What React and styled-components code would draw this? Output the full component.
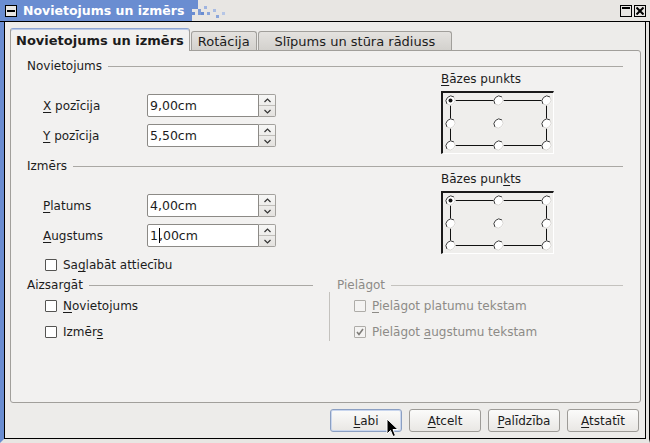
import styled, { createGlobalStyle } from "styled-components";

const GlobalStyle = createGlobalStyle`
  html, body {
    margin: 0;
    padding: 0;
    background: #ffffff;
  }
  body {
    font-family: "DejaVu Sans", "Liberation Sans", sans-serif;
    font-size: 12px;
    color: #1c1c1c;
  }
`;

const Window = styled.div`
  position: relative;
  width: 650px;
  height: 443px;
  box-sizing: border-box;
  display: flex;
  flex-direction: column;
  background: #e6e4e1;
  overflow: hidden;
`;

const TitleBar = styled.div`
  height: 21px;
  flex: none;
  display: flex;
  align-items: center;
  border-bottom: 1px solid #000;
  background: #e8e6e3;
`;

const TitleFill = styled.div`
  height: 100%;
  display: flex;
  align-items: center;
  gap: 6px;
  padding-left: 5px;
  padding-right: 2px;
  background: #6a8dd1;
`;

const TitleText = styled.span`
  color: #ffffff;
  font-weight: bold;
  font-size: 12.5px;
  white-space: nowrap;
`;

const Fade = styled.svg`
  display: block;
  flex: none;
`;

const Spacer = styled.div`
  flex: 1;
`;

const FrameButton = styled.div`
  width: 12px;
  height: 12px;
  box-sizing: border-box;
  border: 1px solid #000;
  background: #e8e6e3;
  display: flex;
  align-items: center;
  justify-content: center;
  margin-right: ${(p) => p.$gap || 0}px;
`;

const Frame = styled.div`
  flex: 1;
  display: flex;
  min-height: 0;
  border-left: 4px solid #6a8dd1;
  border-right: 1px solid #000;
  border-bottom: 4px solid #e8e6e3;
`;

const Body = styled.div`
  flex: 1;
  display: flex;
  flex-direction: column;
  padding: 6px 4px 6px 5px;
  background: #edecea;
  border-left: 1px solid #000;
  border-right: 1px solid #000;
  border-bottom: 1px solid #000;
  margin-right: 3px;
`;

const TabRow = styled.div`
  height: 22px;
  display: flex;
  align-items: flex-end;
  gap: 1px;
`;

const Tab = styled.div`
  position: relative;
  box-sizing: border-box;
  padding: 0 ${(p) => p.$pad}px;
  height: ${(p) => (p.$active ? 23 : 19)}px;
  margin-bottom: ${(p) => (p.$active ? -1 : 0)}px;
  z-index: ${(p) => (p.$active ? 1 : 0)};
  display: flex;
  align-items: center;
  border: 1px solid #a19f9b;
  border-bottom: none;
  border-top-color: ${(p) => (p.$active ? "#8ba4d4" : "#a19f9b")};
  border-radius: 3px 3px 0 0;
  font-weight: ${(p) => (p.$active ? "bold" : "normal")};
  font-size: 13px;
  white-space: nowrap;
  background: ${(p) =>
    p.$active ? "#f2f1f0" : "linear-gradient(#e4e2df, #d3d1cd)"};
  box-shadow: ${(p) => (p.$active ? "inset 0 1px 0 #b9c9e8" : "none")};
`;

const Panel = styled.div`
  flex: 1;
  box-sizing: border-box;
  display: flex;
  flex-direction: column;
  padding: 9px 17px 0 16px;
  background: #f2f1f0;
  border: 1px solid #a19f9b;
  border-radius: 0 3px 3px 3px;
`;

const SectionHeader = styled.div`
  display: flex;
  align-items: center;
  gap: 6px;
  line-height: 13px;
  margin-top: ${(p) => p.$top || 0}px;
  color: ${(p) => (p.$disabled ? "#8d8b87" : "inherit")};
  padding-left: ${(p) => p.$indent || 0}px;

  &::after {
    content: "";
    flex: 1;
    height: 1px;
    background: ${(p) => (p.$disabled ? "#c4c2be" : "#aaa8a4")};
  }
`;

const SectionRow = styled.div`
  display: grid;
  grid-template-columns: 1fr 182px;
`;

const Fields = styled.div`
  display: flex;
  flex-direction: column;
  gap: 7px;
  padding: 21px 0 0 16px;
`;

const FieldRow = styled.div`
  display: flex;
  align-items: center;
  height: 23px;
`;

const FieldLabel = styled.label`
  width: 104px;
`;

const Mn = styled.span`
  text-decoration: underline;
  text-underline-offset: 2px;
`;

const InputBox = styled.div`
  width: 112px;
  height: 23px;
  box-sizing: border-box;
  display: flex;
  align-items: center;
  padding-left: 2px;
  background: #ffffff;
  border: 1px solid #8c8a86;
  border-radius: 2px 0 0 2px;
  font-size: 12.5px;
`;

const Caret = styled.span`
  display: inline-block;
  width: 1px;
  height: 15px;
  margin: 0 -1px 0 1px;
  background: #000;
  vertical-align: middle;
`;

const Spin = styled.div`
  width: 17px;
  height: 23px;
  box-sizing: border-box;
  display: flex;
  flex-direction: column;
  border: 1px solid #a3a19d;
  border-left: none;
  border-radius: 0 2px 2px 0;
  background: linear-gradient(#f7f7f6, #e4e2df);
`;

const SpinHalf = styled.div`
  flex: 1;
  display: flex;
  align-items: center;
  justify-content: center;
  border-top: ${(p) => (p.$lower ? "1px solid #c0beba" : "none")};
`;

const BaseCol = styled.div`
  display: flex;
  flex-direction: column;
`;

const BaseLabel = styled.div`
  line-height: 13px;
`;

const BaseBox = styled.div`
  margin-top: 5px;
  width: 113px;
  height: 63px;
  box-sizing: border-box;
  border-top: 2px solid #1a1a1a;
  border-left: 2px solid #1a1a1a;
  border-right: 1px solid #ffffff;
  border-bottom: 1px solid #ffffff;
  background: #efeeec;
`;

const CheckRow = styled.label`
  display: flex;
  align-items: center;
  gap: 6px;
  height: 14px;
  padding-left: ${(p) => p.$indent || 0}px;
  margin-top: ${(p) => p.$top || 0}px;
  color: ${(p) => (p.$disabled ? "#8d8b87" : "inherit")};
`;

const Box = styled.span`
  width: 12px;
  height: 12px;
  box-sizing: border-box;
  display: flex;
  align-items: center;
  justify-content: center;
  border: 1px solid ${(p) => (p.$disabled ? "#aeaca8" : "#555452")};
  border-radius: 1px;
  background: ${(p) => (p.$disabled ? "#f4f3f2" : "#ffffff")};
`;

const LowerGrid = styled.div`
  display: grid;
  grid-template-columns: 286px 1fr;
  column-gap: 16px;
  margin-top: 7px;
`;

const Column = styled.div`
  display: flex;
  flex-direction: column;
`;

const CheckList = styled.div`
  display: flex;
  flex-direction: column;
  gap: 12px;
  padding: 7px 0 2px ${(p) => p.$pad || 0}px;
  border-left: ${(p) => (p.$rule ? "1px solid #c4c2be" : "none")};
`;

const ButtonRow = styled.div`
  display: flex;
  justify-content: flex-end;
  gap: 7px;
  margin-top: 6px;
  padding-right: 2px;
`;

const Button = styled.button`
  width: 72px;
  height: 23px;
  padding: 0;
  font-family: inherit;
  font-size: 12px;
  color: #1c1c1c;
  border: 1px solid ${(p) => (p.$focused ? "#8b9fc2" : "#9d9b97")};
  border-radius: 3px;
  background: linear-gradient(#fbfbfa, #e9e7e4);
  box-shadow: ${(p) => (p.$focused ? "inset 0 0 0 1px #c9d6ee" : "none")};
`;

const Pointer = styled.svg`
  position: absolute;
  left: 386px;
  top: 418px;
`;

function Chevron({ up }) {
  return (
    <svg width="7" height="5" viewBox="0 0 7 5">
      <path
        d={up ? "M0.5 4 L3.5 1 L6.5 4" : "M0.5 1 L3.5 4 L6.5 1"}
        fill="none"
        stroke="#333"
        strokeWidth="1.2"
      />
    </svg>
  );
}

function SpinField({ children }) {
  return (
    <>
      <InputBox>{children}</InputBox>
      <Spin>
        <SpinHalf>
          <Chevron up />
        </SpinHalf>
        <SpinHalf $lower>
          <Chevron />
        </SpinHalf>
      </Spin>
    </>
  );
}

function Radio({ x, y, on }) {
  return (
    <g>
      <circle cx={x} cy={y} r="5" fill="#ffffff" />
      <path
        d={`M${x - 3.5} ${y + 3.5} A5 5 0 0 1 ${x + 3.5} ${y - 3.5}`}
        fill="none"
        stroke="#3a3a3a"
        strokeWidth="1"
      />
      <path
        d={`M${x + 3.5} ${y - 3.5} A5 5 0 0 1 ${x - 3.5} ${y + 3.5}`}
        fill="none"
        stroke="#d8d6d3"
        strokeWidth="1"
      />
      {on && <circle cx={x} cy={y} r="2" fill="#111" />}
    </g>
  );
}

// 3x3 reference point picker; the first point is selected
function BasePoint() {
  const xs = [7, 55, 103];
  const ys = [7, 30, 52];
  return (
    <BaseBox>
      <svg width="110" height="60" viewBox="0 0 110 60">
        <rect
          x="7.5"
          y="7.5"
          width="96"
          height="45"
          fill="none"
          stroke="#111"
          strokeWidth="1"
        />
        {ys.map((y) =>
          xs.map((x) => (
            <Radio key={`${x}-${y}`} x={x + 0.5} y={y + 0.5} on={x === 7 && y === 7} />
          ))
        )}
      </svg>
    </BaseBox>
  );
}

function Check({ checked, disabled }) {
  return (
    <Box $disabled={disabled}>
      {checked && (
        <svg width="8" height="8" viewBox="0 0 8 8">
          <path
            d="M1 4 L3 6.5 L7 1"
            fill="none"
            stroke={disabled ? "#7f7d79" : "#222"}
            strokeWidth="1.6"
          />
        </svg>
      )}
    </Box>
  );
}

export default function App() {
  return (
    <>
      <GlobalStyle />
      <Window>
        <TitleBar>
          <TitleFill>
            <FrameButton>
              <svg width="8" height="2">
                <rect width="8" height="2" fill="#000" />
              </svg>
            </FrameButton>
            <TitleText>Novietojums un izmērs</TitleText>
          </TitleFill>
          <Fade width="42" height="21" viewBox="0 0 42 21">
            <rect x="0" y="0" width="6" height="21" fill="#6a8dd1" />
            <rect x="6" y="0" width="6" height="9" fill="#6a8dd1" />
            <rect x="6" y="12" width="3" height="3" fill="#6a8dd1" />
            <rect x="12" y="9" width="3" height="6" fill="#7f9cd6" />
            <rect x="15" y="12" width="3" height="3" fill="#6a8dd1" />
            <rect x="18" y="6" width="3" height="3" fill="#9fb4e0" />
            <rect x="21" y="12" width="3" height="3" fill="#8aa5da" />
            <rect x="27" y="9" width="3" height="3" fill="#a9bce3" />
            <rect x="30" y="15" width="3" height="3" fill="#8aa5da" />
            <rect x="36" y="12" width="3" height="3" fill="#b6c6e6" />
          </Fade>
          <Spacer />
          <FrameButton $gap={2}>
            <svg width="8" height="8">
              <rect x="0" y="0" width="8" height="2" fill="#000" />
            </svg>
          </FrameButton>
          <FrameButton $gap={4}>
            <svg width="8" height="8" viewBox="0 0 8 8">
              <path d="M0.5 0.5 L7.5 7.5 M7.5 0.5 L0.5 7.5" stroke="#000" strokeWidth="2" />
            </svg>
          </FrameButton>
        </TitleBar>

        <Frame>
          <Body>
            <TabRow>
              <Tab $active $pad={5}>
                Novietojums un izmērs
              </Tab>
              <Tab $pad={6}>Rotācija</Tab>
              <Tab $pad={16}>Slīpums un stūra rādiuss</Tab>
            </TabRow>

            <Panel>
              <SectionHeader>Novietojums</SectionHeader>
              <SectionRow>
                <Fields>
                  <FieldRow>
                    <FieldLabel>
                      <Mn>X</Mn> pozīcija
                    </FieldLabel>
                    <SpinField>9,00cm</SpinField>
                  </FieldRow>
                  <FieldRow>
                    <FieldLabel>
                      <Mn>Y</Mn> pozīcija
                    </FieldLabel>
                    <SpinField>5,50cm</SpinField>
                  </FieldRow>
                </Fields>
                <BaseCol>
                  <BaseLabel>
                    <Mn>B</Mn>āzes punkts
                  </BaseLabel>
                  <BasePoint />
                </BaseCol>
              </SectionRow>

              <SectionHeader $top={6}>Izmērs</SectionHeader>
              <SectionRow>
                <Fields>
                  <FieldRow>
                    <FieldLabel>
                      <Mn>P</Mn>latums
                    </FieldLabel>
                    <SpinField>4,00cm</SpinField>
                  </FieldRow>
                  <FieldRow>
                    <FieldLabel>
                      <Mn>A</Mn>ugstums
                    </FieldLabel>
                    <SpinField>
                      1<Caret />,00cm
                    </SpinField>
                  </FieldRow>
                </Fields>
                <BaseCol>
                  <BaseLabel>
                    Bāzes pun<Mn>k</Mn>ts
                  </BaseLabel>
                  <BasePoint />
                </BaseCol>
              </SectionRow>

              <CheckRow $indent={18} $top={4}>
                <Check />
                <span>
                  Sa<Mn>g</Mn>labāt attiecību
                </span>
              </CheckRow>

              <LowerGrid>
                <Column>
                  <SectionHeader>Aizsargāt</SectionHeader>
                  <CheckList $pad={18}>
                    <CheckRow>
                      <Check />
                      <span>
                        <Mn>N</Mn>ovietojums
                      </span>
                    </CheckRow>
                    <CheckRow>
                      <Check />
                      <span>
                        Izmēr<Mn>s</Mn>
                      </span>
                    </CheckRow>
                  </CheckList>
                </Column>
                <Column>
                  <SectionHeader $disabled $indent={8}>
                    Pielāgot
                  </SectionHeader>
                  <CheckList $pad={24} $rule>
                    <CheckRow $disabled>
                      <Check disabled />
                      <span>
                        <Mn>P</Mn>ielāgot platumu tekstam
                      </span>
                    </CheckRow>
                    <CheckRow $disabled>
                      <Check disabled checked />
                      <span>
                        Pielāgot <Mn>a</Mn>ugstumu tekstam
                      </span>
                    </CheckRow>
                  </CheckList>
                </Column>
              </LowerGrid>
            </Panel>

            <ButtonRow>
              <Button $focused>
                <Mn>L</Mn>abi
              </Button>
              <Button>
                <Mn>A</Mn>tcelt
              </Button>
              <Button>
                <Mn>P</Mn>alīdzība
              </Button>
              <Button>
                <Mn>A</Mn>tstatīt
              </Button>
            </ButtonRow>
          </Body>
        </Frame>

        <Pointer width="13" height="20" viewBox="0 0 13 20">
          <path
            d="M1 1 L1 16 L4.5 12.5 L7 18.5 L9.5 17.5 L7 11.5 L12 11.5 Z"
            fill="#000"
            stroke="#fff"
            strokeWidth="1"
          />
        </Pointer>
      </Window>
    </>
  );
}
